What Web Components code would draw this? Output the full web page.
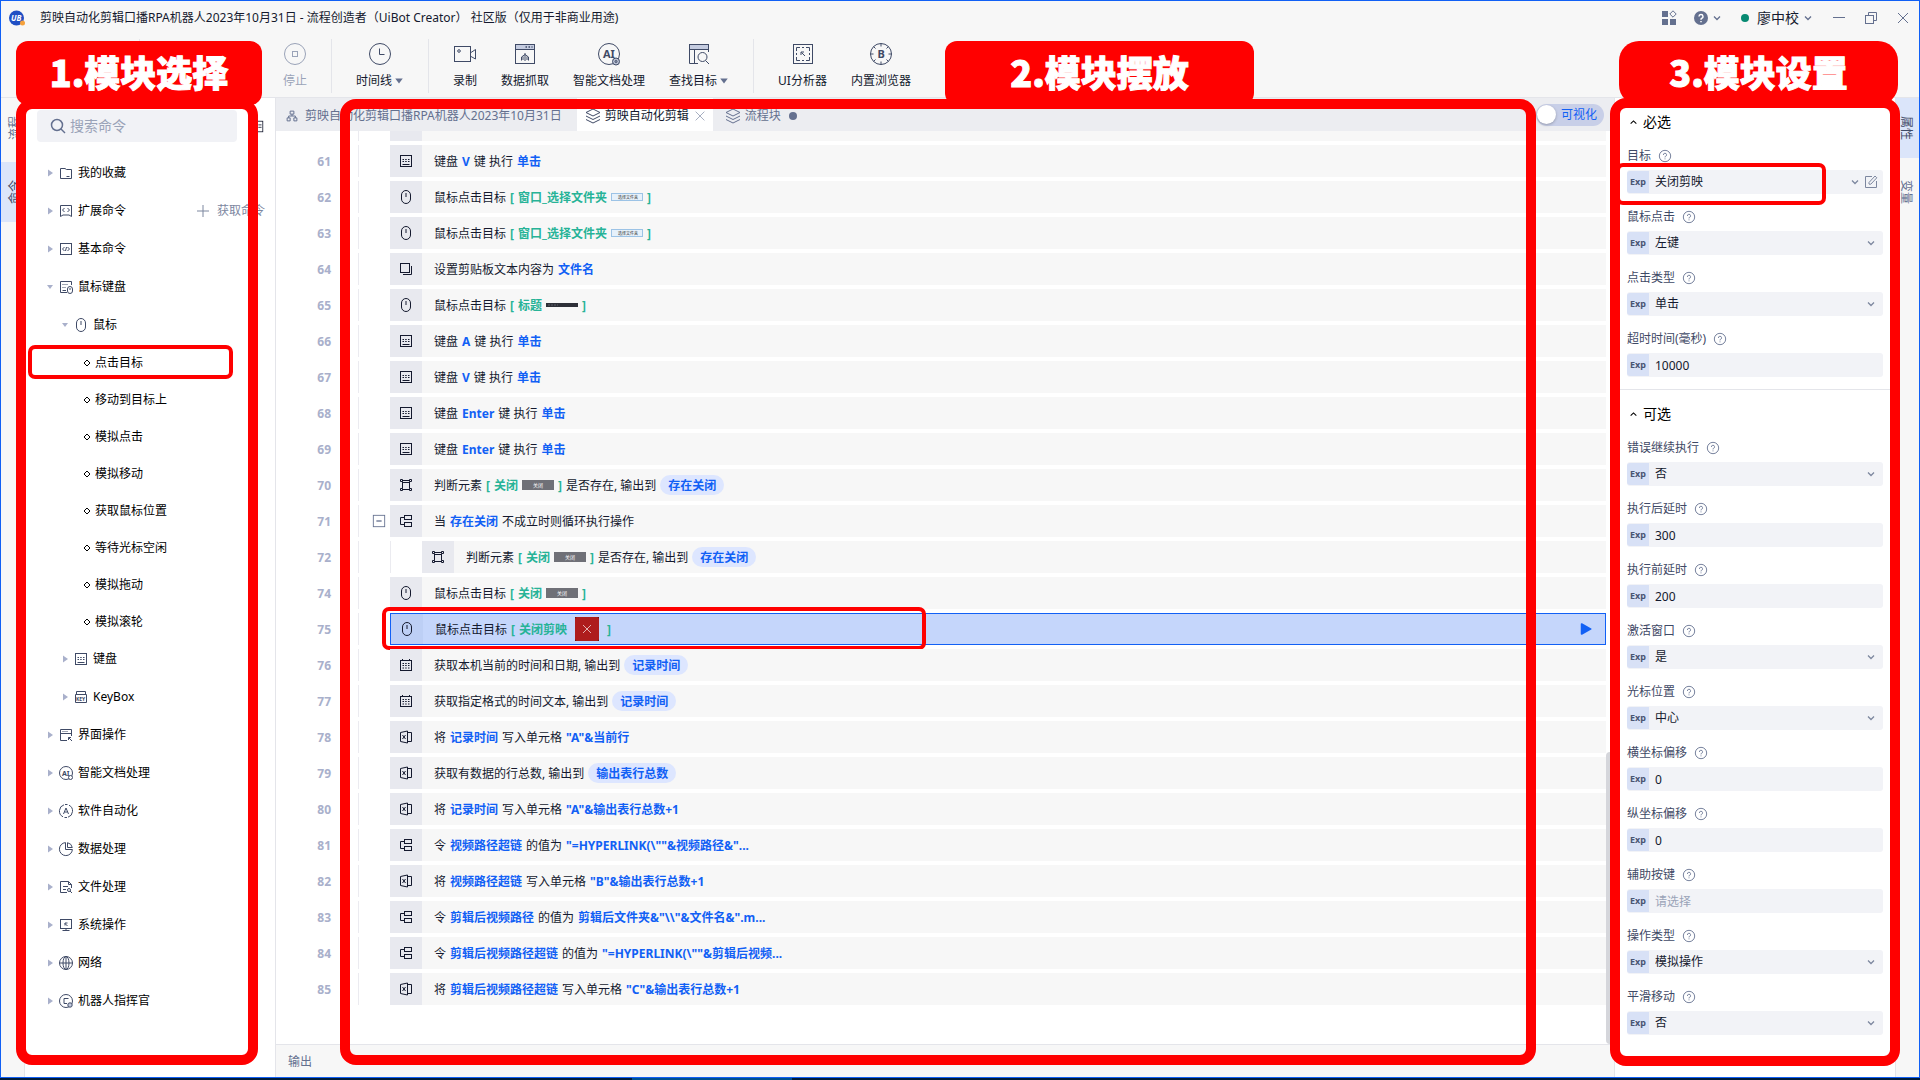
<!DOCTYPE html>
<html lang="zh-CN">
<head>
<meta charset="utf-8">
<title>流程创造者（UiBot Creator）</title>
<style>
	html, body { margin: 0; height: 100%; }
	body {
		font: 12px/20px "Noto Sans", "Noto Sans CJK SC", sans-serif;
		color: #14192e;
		background: #001c3a;
		overflow: hidden;
	}
</style>
</head>
<body>
<app-shell></app-shell>
<script>
const ICONS = {
	// 24px toolbar icons
	stop: `<circle cx="12" cy="12" r="10.5"/><rect x="9.5" y="9.5" width="5" height="5"/>`,
	clock: `<circle cx="12" cy="12" r="10.5"/><path d="M11.5 6.5V12.5H16.5"/>`,
	record: `<rect x="1.5" y="4.5" width="16" height="15"/><circle cx="6" cy="9" r="1.3"/><path d="M18 10.5L22.5 7.5V17L18 14.5"/>`,
	scrape: `<rect x="2.5" y="2.5" width="19" height="19"/><path d="M3 3h18v4H3z" fill="#c5cce0" stroke="none"/><path d="M2.5 7.5H21.5M12 11v8M12 12.5L8.5 15v3.5M12 12.5L15.5 15V18.5M10 14.5V18M14 14.5V18"/><path d="M12.5 5h1.5M15.5 5h1.5M18.5 5h1" stroke-width="1.5"/>`,
	aidoc: `<circle cx="12" cy="12" r="10.5"/><text x="6" y="16" font-size="11" font-weight="700" stroke="none" fill="currentColor">AI</text><circle cx="19" cy="19.5" r="3.5" fill="#b8bfd2"/><circle cx="19" cy="19.5" r="1"/>`,
	find: `<path d="M2.5 6.5V21.5H11M21.5 6.5V10M7.5 7V21.5"/><rect x="2.5" y="2.5" width="19" height="5" fill="#c5cce0"/><circle cx="15.5" cy="15" r="4.5"/><path d="M18.5 18.5L22 22"/>`,
	analyze: `<rect x="2.5" y="2.5" width="19" height="19"/><path d="M5.5 9V5.5H9M11 5.5h2M15 5.5h3.5V9M18.5 11v2M18.5 15v3.5H15M13 18.5H11M9 18.5H5.5V15M5.5 13V11M14 14L10.5 10.5M10 13V10H13"/>`,
	browser: `<circle cx="12" cy="12" r="10.5"/><text x="8.5" y="16" font-size="11" font-weight="700" stroke="none" fill="currentColor">B</text><path d="M12 1.5V4.5M12 19.5V22.5M1.5 12h3M19.5 12h3M4.5 4.5l2 2M19.5 4.5l-2 2M4.5 19.5l2-2M19.5 19.5l-2-2"/>`,
	// 16px icons
	folder: `<path d="M2.5 13.5V3.5H7L8.5 4.5H13.5V13.5Z"/><path d="M8.5 11.5h3"/>`,
	extend: `<path d="M2.5 13.5V2.5H13.5V13.5L11 12H5Z"/><path d="M6.5 5L4.5 7L6.5 9M9.5 5L11.5 7L9.5 9"/>`,
	basic: `<rect x="2.5" y="2.5" width="11" height="11"/><path d="M6.5 6L4.5 8L6.5 10M9.5 6L11.5 8L9.5 10M8.5 6L7.5 10"/>`,
	mousekey: `<path d="M9 13.5H2.5V2.5H13.5V6M4.5 5.5h1M6.5 5.5h1M8.5 5.5h1M4.5 8.5h1M6.5 8.5h1M4.5 11.5H8"/><rect x="9.5" y="7.5" width="5" height="7" rx="2.5"/><path d="M12 9v2"/>`,
	mouse: `<rect x="3.5" y="1.5" width="9" height="13" rx="4.5"/><path d="M8 4v4"/>`,
	keyboard: `<rect x="2.5" y="2.5" width="11" height="11"/><path d="M4.5 6.5h1.5M7.2 6.5h1.5M10 6.5h1.5M4.5 8.5h1.5M7.2 8.5h1.5M10 8.5h1.5M4.5 11.5h7"/>`,
	keybox: `<path d="M3.5 5V2.5H12.5V5M2.5 5.5H13.5V13.5H2.5Z"/><text x="3" y="11.5" font-size="5" font-weight="700" stroke="none" fill="currentColor">KEY</text>`,
	screen: `<path d="M9 13.5H2.5V2.5H13.5V9M2.5 6.5H13.5M4.5 4.5h1M6.5 4.5h1M8.5 4.5h1"/><path d="M14 14l-3.5-3.5M10.5 13V10.5H13"/>`,
	ai: `<circle cx="8" cy="8" r="6.5"/><text x="4" y="10.5" font-size="7" font-weight="700" stroke="none" fill="currentColor">AI</text><circle cx="12.5" cy="12.5" r="2" fill="#fff"/>`,
	auto: `<path d="M6 1.8A6.5 6.5 0 0 0 5 13.8M10 14.2A6.5 6.5 0 0 0 11 2.2"/><path d="M7 1.5H9.5M6.5 14.5H9"/><path d="M5.5 11L8 5L10.5 11M6.5 9H9.5"/>`,
	data: `<path d="M7.5 1.6A6.5 6.5 0 1 0 14.4 8.5H7.5Z"/><path d="M9.5 1.7V6.5H14.3A6 6 0 0 0 9.5 1.7"/>`,
	file: `<path d="M9 13.5H2.5V2.5H10.5L13.5 5.5V9M10.5 2.5V5.5H13.5M5 7.5h5M5 10.5h3"/><circle cx="11" cy="11" r="1.5"/><path d="M12 12l2 2"/>`,
	system: `<rect x="2.5" y="2.5" width="11" height="9"/><path d="M8 11.5V14M4.5 13.5h7M9.5 9L7 6.5M7 8.5V6H9.5"/>`,
	network: `<circle cx="8" cy="8" r="6.5"/><ellipse cx="8" cy="8" rx="3" ry="6.5"/><path d="M1.5 8H14.5M8 1.5V14.5"/>`,
	commander: `<circle cx="8" cy="8" r="6.5"/><path d="M10.5 5.5H6V10.5H9"/><circle cx="12" cy="12" r="2.2" fill="#c5cce0"/>`,
	copy: `<rect x="2.5" y="2.5" width="9" height="9"/><path d="M13.5 5V13.5H5"/>`,
	element: `<path d="M2.5 2.5h2v2h-2zM11.5 2.5h2v2h-2zM2.5 11.5h2v2h-2zM11.5 11.5h2v2h-2zM4.5 3.5h7M4.5 5.5h7M4.5 12.5h7M4.5 4.5v7M11.5 4.5v7"/>`,
	logic: `<rect x="6.5" y="2.5" width="7" height="4"/><rect x="6.5" y="9.5" width="7" height="4"/><path d="M6 4.5H2.5V11.5H6"/>`,
	calendar: `<rect x="2.5" y="3.5" width="11" height="10"/><path d="M4.5 2v2M11.5 2v2M4.5 6.5h1.5M7.2 6.5h1.5M10 6.5h1.5M4.5 8.5h1.5M7.2 8.5h1.5M10 8.5h1.5M4.5 11h1.5M7.2 11h1.5M10 11h1.5"/>`,
	excel: `<path d="M2.5 3.5L9.5 2V14L2.5 12.5Z"/><path d="M9.5 3.5H13.5V12.5H9.5M4.5 6L7.5 10M7.5 6L4.5 10"/>`,
	search: `<circle cx="7" cy="7" r="5.5" stroke-width="1.5"/><path d="M11 11L15 15" stroke-width="1.5"/>`,
	panel: `<rect x="1.5" y="1.5" width="13" height="13"/><path d="M9 6h4M9 9h4"/>`,
	tree: `<path d="M5.5 1.5h5v4h-5zM1.5 10.5h4v4h-4zM10.5 10.5h4v4h-4zM8 5.5V8M3.5 10.5V8H12.5V10.5" stroke-width="1.3"/>`,
	layers: `<path d="M8 1L15 4.5L8 8L1 4.5Z"/><path d="M1 8L8 11.5L15 8M1 11.5L8 15L15 11.5"/>`,
	close: `<path d="M3 3L13 13M13 3L3 13"/>`,
	plus: `<path d="M8 2V14M2 8H14"/>`,
	down: `<path d="M5 6.5L8 9.5L11 6.5" stroke-width="1.3"/>`,
	up: `<path d="M4.5 9.5L8 6L11.5 9.5" stroke-width="1.3"/>`,
	edit: `<path d="M9 2.5H2.5V13.5H13.5V7"/><path d="M6 10V8.5L12 2L13.8 3.8L7.8 10.2H6"/>`,
	help: `<circle cx="8" cy="8" r="6.5"/><path d="M6.2 6.8A1.8 1.8 0 1 1 8.5 8.4C8 8.7 8 9 8 9.6M8 10.8v1"/>`,
	helpfill: `<circle cx="8" cy="8" r="7" fill="currentColor" stroke="none"/><path d="M6 6.5A2 2 0 1 1 8.5 8.5C8 8.8 8 9 8 9.8M8 11v1.3" stroke="#fff" stroke-width="1.5"/>`,
	apps: `<g fill="currentColor" stroke="none"><rect x="1" y="1" width="6" height="6"/><rect x="1" y="9" width="6" height="6"/><rect x="9" y="9" width="6" height="6"/></g><path d="M12 0.8L15.2 4L12 7.2L8.8 4Z"/>`,
	minimize: `<path d="M2 7.5H14"/>`,
	restore: `<rect x="2.5" y="5.5" width="8" height="8"/><path d="M5.5 5.5V2.5H13.5V10.5H10.5"/>`,
	diamond: `<path d="M8 2L14 8L8 14L2 8Z" stroke-width="2"/>`,
	right: `<path d="M4 1L14 8L4 15Z" fill="currentColor" stroke="none"/>`,
	bottom: `<path d="M2 4H14L8 12Z" fill="currentColor" stroke="none"/>`,
	play: `<path d="M2 2.5Q2 1 3.5 1.5L14 7.5Q15 8 14 8.5L3.5 14.5Q2 15 2 13.5Z" fill="currentColor" stroke="none"/>`,
	collapse: `<rect x="1.5" y="1.5" width="13" height="13"/><path d="M5 8h6" stroke-width="1.5"/>`,
	logo: `<circle cx="7.5" cy="8" r="7.5" fill="#1f4fc4" stroke="none"/><text x="2" y="11" font-size="8" font-weight="700" font-style="italic" fill="#fff" stroke="none">UB</text><circle cx="13.5" cy="13" r="2.5" fill="#f5a13c" stroke="none"/>`
};
const BIG = ["stop", "clock", "record", "scrape", "aidoc", "find", "analyze", "browser"];

class UiBase extends HTMLElement {
	connectedCallback() {
		if (this.shadowRoot) return;
		this.attachShadow({ mode: "open" });
		this.shadowRoot.innerHTML = `
			<style>
				* { box-sizing: border-box; }
				button, input, select { font: inherit; color: inherit; border: 0; margin: 0; padding: 0; background: none; border-radius: 0; outline: 0; }
				a { color: inherit; text-decoration: none; }
			</style>${this.render()}`;
	}
}

customElements.define("ui-icon", class extends UiBase {
	render() {
		const name = this.getAttribute("name");
		const box = BIG.includes(name) ? 24 : 16;
		const size = this.getAttribute("size") || box;
		return `
			<style>
				:host { display: block; flex: none; width: ${size}px; height: ${size}px; }
				svg { display: block; overflow: visible; }
			</style>
			<svg width="${size}" height="${size}" viewBox="0 0 ${box} ${box}" fill="none" stroke="currentColor" aria-hidden="true">${ICONS[name]}</svg>`;
	}
});

customElements.define("title-bar", class extends UiBase {
	render() {
		return `
			<style>
				:host { display: flex; align-items: center; height: 35px; padding: 0 8px 2px; color: #14192e; }
				h1 { flex: 1; margin: 0 0 0 15px; font-size: 12px; font-weight: 400; }
				button { display: flex; align-items: center; color: #64708f; }
				.user { font-size: 14px; color: #14192e; gap: 8px; margin: 0 15px 0 16px; }
				.user ui-icon { margin-left: -7px; color: #64708f; }
				.dot { width: 8px; height: 8px; border-radius: 50%; background: #078a72; }
				.win { margin-left: 16px; }
			</style>
			<ui-icon name="logo"></ui-icon>
			<h1>剪映自动化剪辑口播RPA机器人2023年10月31日 - 流程创造者（UiBot Creator） 社区版（仅用于非商业用途)</h1>
			<button aria-label="应用"><ui-icon name="apps"></ui-icon></button>
			<button class="win" aria-label="帮助"><ui-icon name="helpfill"></ui-icon><ui-icon name="down"></ui-icon></button>
			<button class="user"><span class="dot"></span>廖中校<ui-icon name="down"></ui-icon></button>
			<button aria-label="最小化"><ui-icon name="minimize"></ui-icon></button>
			<button class="win" aria-label="还原"><ui-icon name="restore"></ui-icon></button>
			<button class="win" aria-label="关闭"><ui-icon name="close"></ui-icon></button>`;
	}
});

customElements.define("tool-item", class extends UiBase {
	render() {
		return `
			<style>
				:host { display: block; }
				button { display: flex; flex-direction: column; align-items: center; gap: 5px; white-space: nowrap; }
				:host([disabled]) button { color: #9aa3b8; }
				ui-icon { color: #3f4a66; }
				:host([disabled]) ui-icon { color: #9aa3b8; }
				span { display: flex; align-items: center; gap: 2px; }
				span ui-icon { color: #64708f; }
			</style>
			<button ${this.hasAttribute("disabled") ? "disabled" : ""}>
				<ui-icon name="${this.getAttribute("icon")}"></ui-icon>
				<span><slot></slot>${this.hasAttribute("menu") ? `<ui-icon name="bottom" size="10"></ui-icon>` : ""}</span>
			</button>`;
	}
});

customElements.define("tool-bar", class extends UiBase {
	render() {
		return `
			<style>
				:host { display: flex; align-items: center; gap: 24px; height: 62px; padding: 0 0 1px 138px; border-bottom: 1px solid #e4e5ea; }
				hr { width: 1px; height: 54px; margin: 0; border: 0; background: #e4e5ea; }
				.first { margin-right: 119px; }
			</style>
			<hr class="first">
			<tool-item icon="stop" disabled>停止</tool-item>
			<hr>
			<tool-item icon="clock" menu>时间线</tool-item>
			<hr>
			<tool-item icon="record">录制</tool-item>
			<tool-item icon="scrape">数据抓取</tool-item>
			<tool-item icon="aidoc">智能文档处理</tool-item>
			<tool-item icon="find" menu>查找目标</tool-item>
			<hr>
			<tool-item icon="analyze">UI分析器</tool-item>
			<tool-item icon="browser">内置浏览器</tool-item>`;
	}
});

customElements.define("side-rail", class extends UiBase {
	render() {
		const active = Number(this.getAttribute("active"));
		const tabs = this.getAttribute("tabs").split(",");
		return `
			<style>
				:host { display: flex; flex-direction: column; gap: 4px; border: 0 solid #e4e5ea; border-right-width: 1px; }
				:host([right]) { border-width: 0 0 0 1px; }
				button { height: 60px; width: 100%; display: flex; align-items: center; justify-content: center; padding-left: 4px; color: #64708f; }
				:host([right]) button { padding: 0 4px 0 0; }
				button.on { background: #dbe5fa; color: #3f4a66; }
				span { writing-mode: vertical-rl; text-orientation: sideways; line-height: 20px; }
				:host(:not([right])) span { transform: rotate(180deg); }
			</style>
			${tabs.map((t, i) => `<button class="${i === active ? "on" : ""}"><span>${t}</span></button>`).join("")}`;
	}
});

customElements.define("tree-row", class extends UiBase {
	render() {
		const icon = this.getAttribute("icon");
		const level = Number(this.getAttribute("level") || 0);
		const leaf = !icon;
		const arrow = this.hasAttribute("open") ? "bottom" : "right";
		return `
			<style>
				:host { display: flex; align-items: center; height: ${leaf ? 37 : 38}px; position: relative; padding-left: ${leaf ? 58 : 21 + level * 15}px; color: #000; }
				button { display: flex; align-items: center; gap: 4px; white-space: nowrap; }
				.arrow { color: #a9b0cb; }
				.icon { color: #3f4a66; }
				mark-frame { position: absolute; inset: 1px 42px 2px 3px; }
			</style>
			<button>
				${leaf ? `<ui-icon name="diamond" size="8"></ui-icon>` : `<ui-icon class="arrow" name="${arrow}" size="8"></ui-icon><ui-icon class="icon" name="${icon}"></ui-icon>`}
				<slot></slot>
			</button>
			<slot name="extra"></slot>
			${this.hasAttribute("marked") ? `<mark-frame thin></mark-frame>` : ""}`;
	}
});

customElements.define("command-panel", class extends UiBase {
	render() {
		return `
			<style>
				:host { display: block; background: #fff; border-right: 1px solid #e4e5ea; min-height: 0; }
				.search { display: flex; align-items: center; padding: 12px; gap: 14px; }
				.box { flex: none; width: 200px; display: flex; align-items: center; gap: 4px; height: 32px; padding: 0 13px; background: #f1f2f6; border-radius: 4px; color: #64708f; }
				input { flex: 1; min-width: 0; font-size: 14px; }
				input::placeholder { color: #9aa3b8; }
				a { display: flex; align-items: center; gap: 6px; margin-left: 69px; color: #7d879f; white-space: nowrap; }
			</style>
			<div class="search">
				<label class="box"><ui-icon name="search"></ui-icon><input placeholder="搜索命令" aria-label="搜索命令"></label>
				<ui-icon name="panel" size="13"></ui-icon>
			</div>
			<tree-row icon="folder">我的收藏</tree-row>
			<tree-row icon="extend">扩展命令<a slot="extra" href="#"><ui-icon name="plus"></ui-icon>获取命令</a></tree-row>
			<tree-row icon="basic">基本命令</tree-row>
			<tree-row icon="mousekey" open>鼠标键盘</tree-row>
			<tree-row icon="mouse" level="1" open>鼠标</tree-row>
			<tree-row marked>点击目标</tree-row>
			<tree-row>移动到目标上</tree-row>
			<tree-row>模拟点击</tree-row>
			<tree-row>模拟移动</tree-row>
			<tree-row>获取鼠标位置</tree-row>
			<tree-row>等待光标空闲</tree-row>
			<tree-row>模拟拖动</tree-row>
			<tree-row>模拟滚轮</tree-row>
			<tree-row icon="keyboard" level="1">键盘</tree-row>
			<tree-row icon="keybox" level="1">KeyBox</tree-row>
			<tree-row icon="screen">界面操作</tree-row>
			<tree-row icon="ai">智能文档处理</tree-row>
			<tree-row icon="auto">软件自动化</tree-row>
			<tree-row icon="data">数据处理</tree-row>
			<tree-row icon="file">文件处理</tree-row>
			<tree-row icon="system">系统操作</tree-row>
			<tree-row icon="network">网络</tree-row>
			<tree-row icon="commander">机器人指挥官</tree-row>`;
	}
});

customElements.define("tab-strip", class extends UiBase {
	render() {
		return `
			<style>
				:host { display: flex; align-items: center; height: 33px; background: #ecedf1; color: #64708f; }
				.tab { display: flex; align-items: center; gap: 4px; height: 33px; padding: 2px 8px 0; white-space: nowrap; }
				.tab.on { background: #fff; color: #14192e; padding-right: 6px; }
				.on ui-icon { color: #3f4a66; }
				.tab button ui-icon { color: #9aa3b8; }
				.tab.first { gap: 7px; padding: 2px 15px 0 10px; }
				.dot { width: 8px; height: 8px; border-radius: 50%; background: #64708f; margin-left: 4px; }
				.tab.last { padding-left: 12px; }
				.switch { display: flex; align-items: center; gap: 5px; margin-left: auto; margin-right: 10px; height: 22px; padding: 0 7px 0 1px; border-radius: 11px; background: #c8cfe8; color: #1160f5; }
				.switch input { appearance: none; width: 19px; height: 19px; border-radius: 50%; background: #fff; box-shadow: 0 1px 3px #0004; }
			</style>
			<div class="tab first"><ui-icon name="tree" size="12"></ui-icon>剪映自动化剪辑口播RPA机器人2023年10月31日</div>
			<div class="tab on"><ui-icon name="layers"></ui-icon>剪映自动化剪辑<button aria-label="关闭标签"><ui-icon name="close" size="14"></ui-icon></button></div>
			<div class="tab last"><ui-icon name="layers"></ui-icon>流程块<span class="dot"></span></div>
			<label class="switch"><input type="checkbox">可视化</label>`;
	}
});

customElements.define("step-thumb", class extends UiBase {
	render() {
		const kinds = {
			folder: `<svg width="32" height="8"><rect x=".5" y=".5" width="31" height="7" fill="#e6f1fb" stroke="#9cc3e6"/><text x="7" y="6" font-size="4" fill="#333">选择文件夹</text></svg>`,
			dark: `<svg width="32" height="4"><rect width="32" height="4" fill="#2e3038"/><path d="M2 2h10" stroke="#5c5f69" stroke-dasharray="2 1"/></svg>`,
			gray: `<svg width="32" height="10"><rect width="32" height="10" fill="#6f7077"/><text x="11" y="7" font-size="5" fill="#fff">关闭</text></svg>`,
			red: `<svg width="24" height="24"><rect width="24" height="24" fill="#3c0f12"/><rect width="24" height="24" rx="2" fill="#ae1c1c"/><path d="M8 8L16 16M16 8L8 16" stroke="#e3b1b1"/></svg>`
		};
		const kind = this.getAttribute("kind");
		return `<style>:host { display: block; flex: none; ${kind === "red" ? "margin: 0 4px;" : ""} } svg { display: block; }</style>${kinds[kind]}`;
	}
});

customElements.define("flow-step", class extends UiBase {
	render() {
		const nested = this.hasAttribute("nested");
		const active = this.hasAttribute("active");
		return `
			<style>
				:host { display: flex; height: 32px; align-items: stretch; }
				:host([cut]) { height: 10px; overflow: hidden; }
				.no { width: 56px; padding: 1px 1px 0 0; text-align: right; font-weight: 700; line-height: 32px; color: #a9b0cb; }
				.guide { width: 32px; display: flex; align-items: center; justify-content: center; border-left: 1px solid #ebebf0; }
				.no + .guide { margin-left: 26px; }
				.guide button { color: #64708f; margin-left: 8px; }
				.card { flex: 1; display: flex; background: #f7f7f7; position: relative; }
				:host([active]) .card { background: #c5d6fb; border: 1px solid #1160f5; }
				.cell { width: 32px; display: flex; align-items: center; justify-content: center; background: #e8e9ef; }
				:host([active]) .cell { background: #bdcff5; }
				.text { flex: 1; display: flex; align-items: center; gap: 4px; padding: 2px 0 0 12px; white-space: nowrap; }
				.run { color: #1160f5; align-self: center; margin-right: 12px; }
				::slotted(b) { color: #1160f5; font-weight: 700; }
				::slotted(i) { color: #27b397; font-weight: 700; font-style: normal; }
				::slotted(mark) { color: #1160f5; font-weight: 700; line-height: 18px; background: #dde6ff; border-radius: 10px; padding: 2px 8px 0; margin-top: -2px; }
				::slotted(step-thumb) { position: relative; margin-top: -2px; }
				mark-frame { position: absolute; top: -7px; bottom: -6px; left: -9px; width: 544px; }
			</style>
			<span class="no">${this.getAttribute("no") || ""}</span>
			<span class="guide">${this.hasAttribute("open") ? `<button aria-label="折叠"><ui-icon name="collapse" size="14"></ui-icon></button>` : ""}</span>
			${nested ? `<span class="guide"></span>` : ""}
			<div class="card">
				<span class="cell">${this.hasAttribute("cut") ? "" : `<ui-icon name="${this.getAttribute("icon")}"></ui-icon>`}</span>
				<div class="text"><slot></slot></div>
				${active ? `<button class="run" aria-label="运行"><ui-icon name="play" size="14"></ui-icon></button><mark-frame thin></mark-frame>` : ""}
			</div>`;
	}
});

customElements.define("flow-editor", class extends UiBase {
	render() {
		return `
			<style>
				:host { display: flex; flex-direction: column; min-width: 0; min-height: 0; }
				.body { flex: 1; display: flex; min-height: 0; background: #fff; }
				.steps { flex: 1; display: flex; flex-direction: column; gap: 4px; min-width: 0; overflow: hidden; }
				.scroll { width: 8px; display: flex; flex-direction: column; justify-content: flex-end; }
				.thumb { height: 32%; border-radius: 4px; background: #d5d6db; }
				footer { height: 33px; flex: none; padding: 7px 12px; border-top: 1px solid #e4e5ea; color: #64708f; }
			</style>
			<tab-strip></tab-strip>
			<div class="body">
				<div class="steps">
					<flow-step cut></flow-step>
					<flow-step no="61" icon="keyboard">键盘<b>V</b>键 执行<b>单击</b></flow-step>
					<flow-step no="62" icon="mouse">鼠标点击目标<i>[</i><i>窗口_选择文件夹</i><step-thumb kind="folder"></step-thumb><i>]</i></flow-step>
					<flow-step no="63" icon="mouse">鼠标点击目标<i>[</i><i>窗口_选择文件夹</i><step-thumb kind="folder"></step-thumb><i>]</i></flow-step>
					<flow-step no="64" icon="copy">设置剪贴板文本内容为<b>文件名</b></flow-step>
					<flow-step no="65" icon="mouse">鼠标点击目标<i>[</i><i>标题</i><step-thumb kind="dark"></step-thumb><i>]</i></flow-step>
					<flow-step no="66" icon="keyboard">键盘<b>A</b>键 执行<b>单击</b></flow-step>
					<flow-step no="67" icon="keyboard">键盘<b>V</b>键 执行<b>单击</b></flow-step>
					<flow-step no="68" icon="keyboard">键盘<b>Enter</b>键 执行<b>单击</b></flow-step>
					<flow-step no="69" icon="keyboard">键盘<b>Enter</b>键 执行<b>单击</b></flow-step>
					<flow-step no="70" icon="element">判断元素<i>[</i><i>关闭</i><step-thumb kind="gray"></step-thumb><i>]</i>是否存在, 输出到<mark>存在关闭</mark></flow-step>
					<flow-step no="71" icon="logic" open>当<b>存在关闭</b>不成立时则循环执行操作</flow-step>
					<flow-step no="72" icon="element" nested>判断元素<i>[</i><i>关闭</i><step-thumb kind="gray"></step-thumb><i>]</i>是否存在, 输出到<mark>存在关闭</mark></flow-step>
					<flow-step no="74" icon="mouse">鼠标点击目标<i>[</i><i>关闭</i><step-thumb kind="gray"></step-thumb><i>]</i></flow-step>
					<flow-step no="75" icon="mouse" active>鼠标点击目标<i>[</i><i>关闭剪映</i><step-thumb kind="red"></step-thumb><i>]</i></flow-step>
					<flow-step no="76" icon="calendar">获取本机当前的时间和日期, 输出到<mark>记录时间</mark></flow-step>
					<flow-step no="77" icon="calendar">获取指定格式的时间文本, 输出到<mark>记录时间</mark></flow-step>
					<flow-step no="78" icon="excel">将<b>记录时间</b>写入单元格<b>"A"&amp;当前行</b></flow-step>
					<flow-step no="79" icon="excel">获取有数据的行总数, 输出到<mark>输出表行总数</mark></flow-step>
					<flow-step no="80" icon="excel">将<b>记录时间</b>写入单元格<b>"A"&amp;输出表行总数+1</b></flow-step>
					<flow-step no="81" icon="logic">令<b>视频路径超链</b>的值为<b>"=HYPERLINK(\\""&amp;视频路径&amp;"...</b></flow-step>
					<flow-step no="82" icon="excel">将<b>视频路径超链</b>写入单元格<b>"B"&amp;输出表行总数+1</b></flow-step>
					<flow-step no="83" icon="logic">令<b>剪辑后视频路径</b>的值为<b>剪辑后文件夹&amp;"\\\\"&amp;文件名&amp;".m...</b></flow-step>
					<flow-step no="84" icon="logic">令<b>剪辑后视频路径超链</b>的值为<b>"=HYPERLINK(\\""&amp;剪辑后视频...</b></flow-step>
					<flow-step no="85" icon="excel">将<b>剪辑后视频路径超链</b>写入单元格<b>"C"&amp;输出表行总数+1</b></flow-step>
				</div>
				<div class="scroll"><div class="thumb"></div></div>
			</div>
			<footer>输出</footer>`;
	}
});

customElements.define("prop-field", class extends UiBase {
	render() {
		const type = this.getAttribute("type") || "select";
		const label = this.getAttribute("label");
		const value = this.getAttribute("value") || "";
		const control = type === "select"
			? `<select id="f"><option>${value}</option></select><ui-icon class="down" name="down"></ui-icon>`
			: `<input id="f" value="${value}" placeholder="${this.getAttribute("placeholder") || ""}">`;
		return `
			<style>
				:host { display: block; }
				.head { display: flex; align-items: center; gap: 7px; height: 20px; margin-bottom: 4px; color: #3f4a66; }
				.head ui-icon { color: #64708f; }
				.field { position: relative; display: flex; align-items: center; height: 24px; background: #f2f3f7; border-radius: 3px; color: #14192e; }
				.exp { width: 22px; height: 22px; flex: none; font-size: 9px; line-height: 20px; font-weight: 700; color: #4a5573; background: #d8e1f6; border-radius: 3px 0 0 3px; }
				select, input { appearance: none; flex: 1; min-width: 0; height: 24px; padding-left: 6px; }
				input::placeholder { color: #9aa3b8; }
				.down { color: #7d879f; margin-right: 4px; }
				.edit { color: #7d879f; margin-right: 4px; }
				:host([marked]) .down { margin-right: 0; }
				mark-frame { position: absolute; inset: -7px 57px -11px -11px; }
			</style>
			<div class="head"><label for="f">${label}</label><ui-icon name="help" size="14"></ui-icon></div>
			<div class="field">
				<button class="exp">Exp</button>
				${control}
				${this.hasAttribute("marked") ? `<button class="edit" aria-label="编辑"><ui-icon name="edit"></ui-icon></button><mark-frame thin></mark-frame>` : ""}
			</div>`;
	}
});

customElements.define("prop-group", class extends UiBase {
	render() {
		return `
			<style>
				:host { display: flex; flex-direction: column; gap: 13px; padding: 0 12px 12px; border-bottom: 1px solid #e4e5ea; }
				:host(:last-of-type) { border-bottom: 0; }
				button { display: flex; align-items: center; gap: 3px; height: 48px; margin-bottom: -13px; font-size: 14px; color: #000; }
			</style>
			<button><ui-icon name="up" size="13"></ui-icon>${this.getAttribute("label")}</button>
			<slot></slot>`;
	}
});

customElements.define("property-panel", class extends UiBase {
	render() {
		return `
			<style>
				:host { display: block; background: #fff; border-left: 1px solid #e4e5ea; }
			</style>
			<prop-group label="必选">
				<prop-field label="目标" value="关闭剪映" marked></prop-field>
				<prop-field label="鼠标点击" value="左键"></prop-field>
				<prop-field label="点击类型" value="单击"></prop-field>
				<prop-field label="超时时间(毫秒)" type="text" value="10000"></prop-field>
			</prop-group>
			<prop-group label="可选">
				<prop-field label="错误继续执行" value="否"></prop-field>
				<prop-field label="执行后延时" type="text" value="300"></prop-field>
				<prop-field label="执行前延时" type="text" value="200"></prop-field>
				<prop-field label="激活窗口" value="是"></prop-field>
				<prop-field label="光标位置" value="中心"></prop-field>
				<prop-field label="横坐标偏移" type="text" value="0"></prop-field>
				<prop-field label="纵坐标偏移" type="text" value="0"></prop-field>
				<prop-field label="辅助按键" type="text" placeholder="请选择"></prop-field>
				<prop-field label="操作类型" value="模拟操作"></prop-field>
				<prop-field label="平滑移动" value="否"></prop-field>
			</prop-group>`;
	}
});

// red outline drawn over a region
customElements.define("mark-frame", class extends UiBase {
	render() {
		return `
			<style>
				:host { display: block; box-sizing: border-box; border: 10px solid #f00; border-radius: 16px; pointer-events: none; }
				:host([thin]) { border-width: 4px; border-radius: 7px; }
			</style>`;
	}
});

customElements.define("mark-badge", class extends UiBase {
	render() {
		return `
			<style>
				:host { display: flex; align-items: center; justify-content: center; box-sizing: border-box; height: 64px; padding-bottom: 4px; background: #f00; border-radius: 12px; color: #fff; font: 900 36px/36px "Noto Sans CJK SC", sans-serif; -webkit-text-stroke: 1px #fff; white-space: nowrap; }
			</style>
			<slot></slot>`;
	}
});

customElements.define("app-shell", class extends UiBase {
	render() {
		return `
			<style>
				:host { display: flex; flex-direction: column; height: 100vh; position: relative; }
				.window { flex: 1; min-height: 0; display: flex; flex-direction: column; background: #f7f7f7; border: 1px solid #1160f5; }
				title-bar, tool-bar { flex: none; }
				main { flex: 1; min-height: 0; display: grid; grid-template-columns: 24px 251px minmax(0, 1fr) 281px 24px; grid-template-rows: minmax(0, 1fr); }
				.taskbar { height: 2px; display: flex; background: #001c3a; }
				.taskbar span { width: 160px; margin-left: 632px; background: #00508f; }
				mark-frame, mark-badge { position: absolute; }
				.f1 { left: 16px; width: 242px; top: 99px; bottom: 15px; }
				.f2 { left: 340px; right: 384px; top: 99px; bottom: 15px; }
				.f3 { right: 20px; width: 290px; top: 98px; bottom: 14px; }
				.b1 { left: 16px; width: 246px; top: 41px; }
				.b2 { left: 945px; width: 309px; top: 41px; }
				.b3 { right: 22px; width: 279px; top: 41px; border-radius: 20px; }
			</style>
			<div class="window">
				<title-bar></title-bar>
				<tool-bar></tool-bar>
				<main>
					<side-rail tabs="流程,命令" active="1"></side-rail>
					<command-panel></command-panel>
					<flow-editor></flow-editor>
					<property-panel></property-panel>
					<side-rail right tabs="属性,变量" active="0"></side-rail>
				</main>
			</div>
			<div class="taskbar"><span></span></div>
			<mark-frame class="f1"></mark-frame>
			<mark-frame class="f2"></mark-frame>
			<mark-frame class="f3"></mark-frame>
			<mark-badge class="b1">1.模块选择</mark-badge>
			<mark-badge class="b2">2.模块摆放</mark-badge>
			<mark-badge class="b3">3.模块设置</mark-badge>`;
	}
});
</script>
</body>
</html>
